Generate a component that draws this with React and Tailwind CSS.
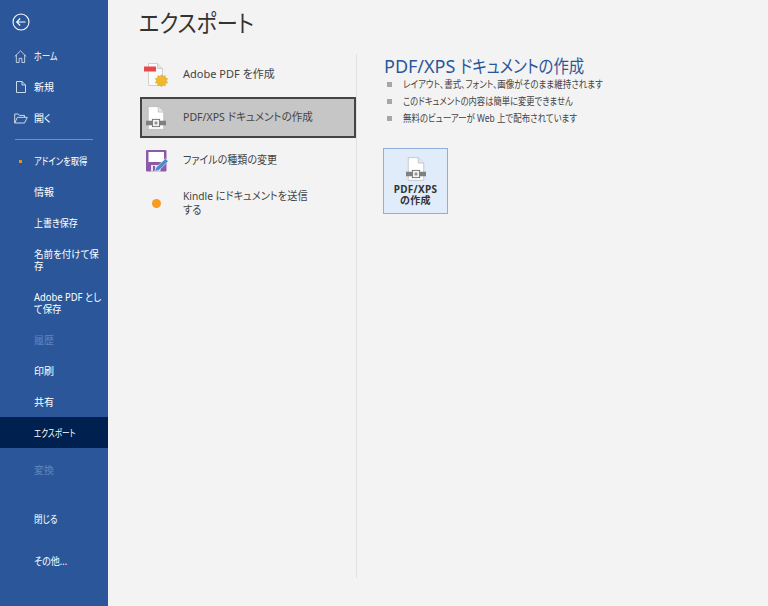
const fontClass = "font-['Noto_Sans','Noto_Sans_CJK_JP',sans-serif] [font-feature-settings:'palt']";

function BackIcon() {
  return (
    <svg width="18" height="18" viewBox="0 0 18 18" fill="none" stroke="#fff" strokeWidth="1.1">
      <circle cx="9" cy="9" r="8" />
      <path d="M13.5 9H4.8M8.2 5.5 4.7 9l3.5 3.5" />
    </svg>
  );
}

function HomeIcon() {
  return (
    <svg width="13" height="13" viewBox="0 0 14 14" fill="none" stroke="#dfe6f2" strokeWidth="0.9">
      <path d="M.8 7 7 .9 13.2 7M2.5 5.5v8h3V9h3v4.5h3v-8" />
    </svg>
  );
}

function NewIcon() {
  return (
    <svg width="10" height="12" viewBox="0 0 10 12" fill="none" stroke="#dfe6f2" strokeWidth="0.9">
      <path d="M.5.5h5.5l3.5 3.5v7.5H.5zM6 .5V4h3.5" />
    </svg>
  );
}

function OpenIcon() {
  return (
    <svg width="14" height="11" viewBox="0 0 14 11" fill="none" stroke="#dfe6f2" strokeWidth="0.9">
      <path d="M.7 10V1h3.6l1.2 1.4h5V4.3M.7 10h9.8l2.8-5.7H3.4z" />
    </svg>
  );
}

function SmallDoc({ width = 20, height = 24 }) {
  return (
    <svg width={width} height={height} viewBox="0 0 22 26">
      <path d="M2.5.5h11l6 6v19h-17z" fill="#fff" stroke="#b9b9b9" strokeWidth="0.8" />
      <path d="M13.5.5v6h6" fill="#e8e8e8" stroke="#b9b9b9" strokeWidth="0.8" />
      <rect x="0" y="16" width="22" height="5" fill="#808080" />
      <rect x="7" y="14.5" width="8" height="8" fill="#f2f2f2" stroke="#707070" />
      <rect x="9.5" y="17" width="3" height="3" fill="#909090" />
    </svg>
  );
}

function AdobeIcon() {
  return (
    <svg width="26" height="26" viewBox="0 0 26 26">
      <path d="M5.5 1.5h9l5 5v17h-14z" fill="#fafafa" stroke="#c8c8c8" strokeWidth="0.8" />
      <path d="M14.5 1.5v5h5" fill="#e6e6e6" stroke="#c8c8c8" strokeWidth="0.8" />
      <rect x="1" y="4.5" width="12" height="5" fill="#e8484b" />
      <path d="M18.5 12.5l1.4 2 2.2-1 .2 2.5 2.4.6-1.3 2.1 1.3 2.1-2.4.6-.2 2.5-2.2-1-1.4 2-1.4-2-2.2 1-.2-2.5-2.4-.6 1.3-2.1-1.3-2.1 2.4-.6.2-2.5 2.2 1z" fill="#f0b92d" stroke="#c9922a" strokeWidth="0.4" />
    </svg>
  );
}

function SaveIcon() {
  return (
    <svg className="ml-[2px]" width="24" height="24" viewBox="0 0 24 24">
      <rect x="1" y="1" width="20.5" height="21.5" rx="1" fill="#8c5aa8" />
      <rect x="3.5" y="3" width="15.5" height="10" fill="#fff" />
      <rect x="6" y="16" width="9.5" height="6.5" fill="#e9dff0" />
      <rect x="8" y="17" width="2" height="5" fill="#8c5aa8" />
      <path d="M9.5 22.5 11 18.5 20.5 9.5l2.8 2.8-9.6 9.2z" fill="#4a8cc9" stroke="#f3f3f3" strokeWidth="0.6" />
    </svg>
  );
}

function NavRow({ label, icon, disabled, active, dot, squeeze = "" }) {
  return (
    <div className={`flex items-center ${icon ? "pt-[11px] pb-[8px]" : "pt-[10px] pb-[9px]"} ${active ? "bg-[#002050]" : ""}`}>
      <span className="w-[34px] h-[12px] shrink-0 flex items-center justify-center pl-[10px] pr-[3px]">
        {icon}
        {dot && <span className="block size-[3px] bg-[#f08a1d]" />}
      </span>
      <span className={`text-[10px] leading-[12px] w-[72px] break-all origin-left ${squeeze} ${disabled ? "text-[#5f86c0]" : "text-white"}`}>
        {label}
      </span>
    </div>
  );
}

function ExportItem({ icon, selected, squeeze = "", children }) {
  return (
    <div className={`flex items-center h-[41px] border-2 ${selected ? "bg-[#c6c6c6] border-[#444]" : "border-transparent"}`}>
      <span className="w-[28px] mr-[13px] shrink-0 flex justify-center">{icon}</span>
      <span className={`text-[11px] leading-[14px] text-[#444] w-[136px] -mt-[2px] origin-left ${squeeze}`}>{children}</span>
    </div>
  );
}

export default function App() {
  return (
    <div className={`flex h-[606px] w-[768px] overflow-hidden bg-[#f3f3f3] ${fontClass}`}>
      {/* Sidebar */}
      <aside className="w-[108px] shrink-0 bg-[#2b579a] flex flex-col">
        <div className="pl-[12px] pt-[13px] h-[39px]">
          <BackIcon />
        </div>
        <NavRow label="ホーム" icon={<HomeIcon />} squeeze="scale-x-[.82]" />
        <NavRow label="新規" icon={<NewIcon />} />
        <NavRow label="開く" icon={<OpenIcon />} />
        <div className="mx-[15px] mt-[7px] mb-[5px] h-px bg-[#6f90c0]" />
        <NavRow label="アドインを取得" dot squeeze="scale-x-[.83]" />
        <NavRow label="情報" />
        <NavRow label="上書き保存" squeeze="scale-x-[.9]" />
        <NavRow label="名前を付けて保存" squeeze="scale-x-[.95]" />
        <NavRow label="Adobe PDF として保存" squeeze="scale-x-[.94]" />
        <NavRow label="履歴" disabled />
        <NavRow label="印刷" />
        <NavRow label="共有" />
        <NavRow label="エクスポート" active squeeze="scale-x-[.76]" />
        <div className="h-[6px]" />
        <NavRow label="変換" disabled />
        <div className="h-[18px]" />
        <NavRow label="閉じる" squeeze="scale-x-[.85]" />
        <div className="h-[11px]" />
        <NavRow label="その他..." squeeze="scale-x-[.9]" />
      </aside>

      {/* Main */}
      <main className="flex-1 pl-[31px] flex flex-col">
        <h1 className="text-[24px] leading-[34px] origin-left scale-x-[.88] text-[#333] mt-[6px] h-[48px]">エクスポート</h1>
        <div className="flex h-[524px]">
          <div className="w-[218px] pl-px flex flex-col gap-[2px] border-r border-[#e1e1e1]">
            <ExportItem icon={<AdobeIcon />}>Adobe PDF を作成</ExportItem>
            <ExportItem icon={<SmallDoc />} selected squeeze="scale-x-[.96]">
              PDF/XPS ドキュメントの作成
            </ExportItem>
            <ExportItem icon={<SaveIcon />} squeeze="scale-x-[.91]">ファイルの種類の変更</ExportItem>
            <ExportItem icon={<span className="size-[9px] block rounded-full bg-[#fb9a20]" />} squeeze="scale-x-[.93]">
              Kindle にドキュメントを送信する
            </ExportItem>
          </div>

          <div className="pl-[27px] pt-[1px]">
            <h2 className="text-[18px] leading-[22px] text-[#2b579a]">
              PDF/XPS <span className="inline-block origin-left scale-x-[.855]">ドキュメントの作成</span>
            </h2>
            <ul className="mt-[1px] flex flex-col gap-[4px]">
              <li className="flex items-center h-[13px] text-[10px] leading-[13px] text-[#444]">
                <span className="size-[5px] bg-[#a6a6a6] ml-[3px] mr-[11px]" />
                <span className="origin-left scale-x-[.85]">レイアウト、書式、フォント、画像がそのまま維持されます</span>
              </li>
              <li className="flex items-center h-[13px] text-[10px] leading-[13px] text-[#444]">
                <span className="size-[5px] bg-[#a6a6a6] ml-[3px] mr-[11px]" />
                <span className="origin-left scale-x-[.83]">このドキュメントの内容は簡単に変更できません</span>
              </li>
              <li className="flex items-center h-[13px] text-[10px] leading-[13px] text-[#444]">
                <span className="size-[5px] bg-[#a6a6a6] ml-[3px] mr-[11px]" />
                <span className="origin-left scale-x-[.845]">無料のビューアーが Web 上で配布されています</span>
              </li>
            </ul>
            <button className="-ml-px mt-[23px] w-[65px] h-[66px] flex flex-col items-center pt-[8px] bg-[#e1ecfa] border border-[#8eaedb] text-[10px] leading-[11px] font-bold text-[#333]">
              <SmallDoc />
              <span className="mt-[3px] tracking-[0.3px]">
                PDF/XPS
                <br />
                の作成
              </span>
            </button>
          </div>
        </div>
      </main>
    </div>
  );
}
